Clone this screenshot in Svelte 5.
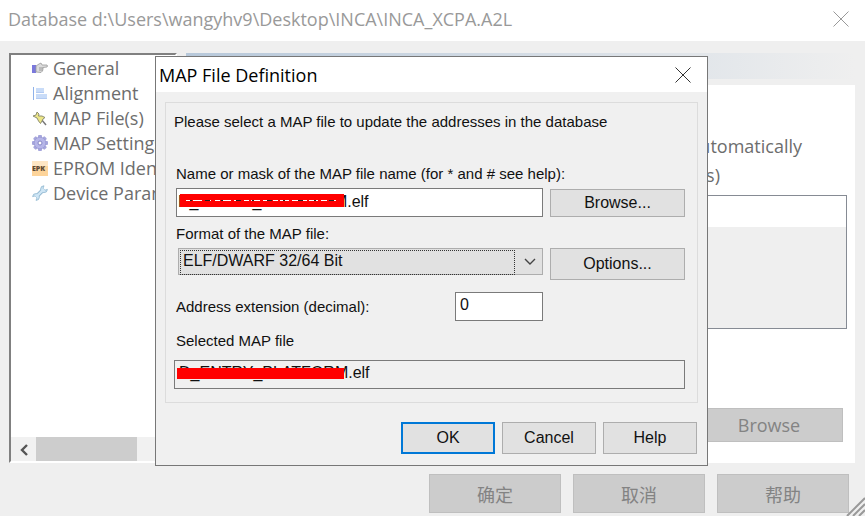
<script lang="ts">
  type TreeItem = { icon: string; label: string };

  const treeItems: TreeItem[] = [
    { icon: 'hand', label: 'General' },
    { icon: 'align', label: 'Alignment' },
    { icon: 'pin', label: 'MAP File(s)' },
    { icon: 'gear', label: 'MAP Settings' },
    { icon: 'epk', label: 'EPROM Identification' },
    { icon: 'wrench', label: 'Device Parameters' }
  ];

  const teeth = [0, 45, 90, 135, 180, 225, 270, 315];

  let fileMask = $state('D_ENTRY_PLATFORM.elf');
  let selectedFile = $state('D_ENTRY_PLATFORM.elf');
  let format = $state('ELF/DWARF 32/64 Bit');
  let extension = $state('0');
</script>

{#snippet treeIcon(name: string)}
  <svg class="tree-icon" viewBox="0 0 16 16" aria-hidden="true">
    {#if name === 'hand'}
      <rect x="0" y="5" width="4" height="8" fill="#7a78dc" />
      <path
        d="M4 6 L7 4 L9 3 L10 5 L15 5 Q16 6 15 7 L11 7.5 L11 9 L10.5 11 L9 12.5 L4 12 Z"
        fill="#dcdcdc"
        stroke="#9a9a9a"
        stroke-width="0.8"
      />
      <path d="M7 8 H11 M7 10 H10.5" stroke="#8c8c8c" stroke-width="0.8" />
    {:else if name === 'align'}
      <path d="M1.5 2 V15" stroke="#8fb2ea" />
      <rect x="4" y="3" width="8" height="4" fill="#c9dcf8" />
      <rect x="4" y="9" width="11" height="5" fill="#c9dcf8" />
      <path d="M4 7.5 H12 M4 13.5 H15" stroke="#b3cbf2" />
    {:else if name === 'pin'}
      <path d="M9 9 L14 15" stroke="#777" stroke-width="1.4" />
      <path
        d="M5 2 L7 4 L6.5 6 L10 6 L13 7.5 L11 9 L10 11 L8.5 13.5 L6.5 11 L5 8 L1 6 L4 5 Z"
        fill="#ece688"
        stroke="#85856a"
        stroke-width="0.9"
      />
    {:else if name === 'gear'}
      {#each teeth as angle}
        <rect
          x="6"
          y="0"
          width="4"
          height="4"
          rx="1"
          fill="#a6a6dc"
          transform="rotate({angle} 8 8)"
        />
      {/each}
      <circle cx="8" cy="8" r="5.8" fill="#b6b6e8" stroke="#9c9cd6" stroke-width="0.8" />
      <circle cx="8" cy="8" r="2" fill="#fff" stroke="#8585c4" />
    {:else if name === 'epk'}
      <rect x="0" y="1" width="16" height="15" fill="#fdd49a" />
      <rect x="0" y="1" width="16" height="5" fill="#fee6c4" />
      <text x="0" y="11" font-size="7" font-weight="800" fill="#5c4a38">EPK</text>
    {:else}
      <path d="M4 12 L12 4" stroke="#8fb6cf" stroke-width="4" />
      <path
        d="M12 0.8 A3.4 3.4 0 1 0 15.4 4.4 L13 5.2 L11 3.2 Z M4 15.4 A3.4 3.4 0 1 0 0.6 11.6 L3 11 L5 13 Z"
        fill="#cfe6f5"
        stroke="#8fb6cf"
        stroke-width="0.8"
      />
      <path d="M4 12 L12 4" stroke="#cfe6f5" stroke-width="2.4" />
    {/if}
  </svg>
{/snippet}

<div class="window">
  <header class="titlebar">
    <h1>Database d:\Users\wangyhv9\Desktop\INCA\INCA_XCPA.A2L</h1>
    <button class="close" aria-label="Close window">
      <svg viewBox="0 0 16 16"><path d="M0.5 0.5 L15.5 15.5 M15.5 0.5 L0.5 15.5" /></svg>
    </button>
  </header>

  <main class="body">
    <nav class="tree">
      <ul>
        {#each treeItems as item}
          <li>
            {@render treeIcon(item.icon)}
            <span>{item.label}</span>
          </li>
        {/each}
      </ul>
      <div class="scrollbar">
        <button class="scroll-left" aria-label="Scroll left">
          <svg viewBox="0 0 10 12"><path d="M8 1 L3 6 L8 11" /></svg>
        </button>
        <div class="thumb"></div>
      </div>
    </nav>

    <div class="content">
      <div class="banner"></div>
      <section class="page">
        <p>automatically</p>
        <p class="file-count">(s)</p>
        <div class="listbox"><div class="list-row"></div></div>
        <button class="flat page-browse" disabled>Browse</button>
      </section>
    </div>
  </main>

  <footer class="actions">
    <button class="flat" disabled>确定</button>
    <button class="flat" disabled>取消</button>
    <button class="flat" disabled>帮助</button>
  </footer>

  <svg class="grip" viewBox="0 0 20 20" aria-hidden="true">
    <path d="M2 20 L20 2 M8 20 L20 8 M14 20 L20 14" />
  </svg>

  <div class="dialog" role="dialog" aria-labelledby="dialog-title">
    <header class="dialog-title">
      <h2 id="dialog-title">MAP File Definition</h2>
      <button class="close" aria-label="Close dialog">
        <svg viewBox="0 0 16 16"><path d="M0.5 0.5 L15.5 15.5 M15.5 0.5 L0.5 15.5" /></svg>
      </button>
    </header>

    <div class="group">
      <p class="intro">Please select a MAP file to update the addresses in the database</p>

      <label for="mask">Name or mask of the MAP file name (for * and # see help):</label>
      <div class="row mask-row">
        <div class="field mask-field">
          <input id="mask" type="text" bind:value={fileMask} />
          <svg class="redact mask-redact" viewBox="0 0 164 13" aria-hidden="true">
            <rect width="164" height="13" fill="#f00" />
            <path d="M6 6.5 H158" stroke="#fff" stroke-dasharray="5 2 9 3 6 4" />
            <path d="M10 6.5 H158" stroke="#222" stroke-dasharray="2 13 5 11" />
          </svg>
        </div>
        <button class="btn">Browse...</button>
      </div>

      <label for="format">Format of the MAP file:</label>
      <div class="row format-row">
        <div class="field select-field">
          <select id="format" bind:value={format}>
            <option>ELF/DWARF 32/64 Bit</option>
          </select>
          <svg class="chevron" viewBox="0 0 12 8"><path d="M1 1 L6 6 L11 1" /></svg>
        </div>
        <button class="btn">Options...</button>
      </div>

      <div class="extension-row">
        <label for="extension">Address extension (decimal):</label>
        <input id="extension" type="text" bind:value={extension} />
      </div>

      <label for="selected">Selected MAP file</label>
      <div class="field selected-field">
        <input id="selected" type="text" readonly bind:value={selectedFile} />
        <div class="redact selected-redact"></div>
      </div>
    </div>

    <footer class="dialog-actions">
      <button class="btn default">OK</button>
      <button class="btn">Cancel</button>
      <button class="btn">Help</button>
    </footer>
  </div>
</div>

<style>
  :global(body) {
    margin: 0;
  }

  .window,
  .window * {
    box-sizing: border-box;
  }

  .window {
    position: relative;
    display: flex;
    flex-direction: column;
    min-height: 100vh;
    overflow: hidden;
    background: #efefef;
    color: #6d6d6d;
    font-family: 'Open Sans', 'Noto Sans CJK SC', sans-serif;
    font-size: 18px;
  }

  h1,
  h2,
  p,
  ul {
    margin: 0;
    padding: 0;
    font-weight: normal;
  }

  button {
    padding: 0;
    font: inherit;
  }

  .titlebar {
    display: flex;
    align-items: center;
    justify-content: space-between;
    height: 41px;
    padding: 0 16px 4px 8px;
    background: #fff;
    color: #999;
  }

  h1,
  h2 {
    font-size: 18px;
  }

  .close {
    display: flex;
    border: 0;
    background: none;
  }

  .close svg {
    width: 16px;
    height: 16px;
    stroke: #999;
  }

  .body {
    display: flex;
    flex: 1;
    gap: 9px;
    padding: 12px 10px 0 9px;
  }

  /* Tree */
  .tree {
    display: flex;
    flex-direction: column;
    width: 168px;
    overflow: hidden;
    border: 2px solid #808080;
    border-right-color: #fff;
    border-bottom-color: #fff;
    background: #fff;
  }

  ul {
    flex: 1;
    padding-left: 21px;
    list-style: none;
  }

  li {
    display: flex;
    align-items: center;
    gap: 5px;
    height: 25px;
    white-space: nowrap;
  }

  .tree-icon {
    flex: none;
    width: 16px;
    height: 16px;
    fill: none;
  }

  .scrollbar {
    display: flex;
    height: 24px;
    background: #f1f1f1;
  }

  .scroll-left {
    width: 25px;
    border: 0;
    background: none;
  }

  .scroll-left svg {
    width: 10px;
    height: 12px;
    fill: none;
    stroke: #555;
    stroke-width: 2.4;
  }

  .thumb {
    width: 101px;
    background: #cdcdcd;
  }

  /* Page */
  .content {
    display: flex;
    flex: 1;
    flex-direction: column;
    gap: 6px;
  }

  .banner {
    height: 26px;
    background: linear-gradient(90deg, #b7c8da, #efefef);
  }

  .page {
    display: flex;
    flex: 1;
    flex-direction: column;
    align-items: flex-end;
    padding: 47px 8px 21px;
    background: #fff;
  }

  .page p {
    padding-right: 45px;
    line-height: 29px;
  }

  .page .file-count {
    padding-right: 127px;
  }

  .listbox {
    width: 100%;
    height: 134px;
    margin: 5px 0 auto;
    border: 1px solid #868b94;
    background: #efefef;
  }

  .list-row {
    height: 31px;
    background: #fff;
  }

  .flat {
    width: 132px;
    height: 39px;
    border: 1px solid #bfbfbf;
    background: #ccc;
    color: #838383;
  }

  .page-browse {
    width: 148px;
    height: 34px;
    margin-right: 4px;
  }

  .actions {
    display: flex;
    justify-content: flex-end;
    gap: 12px;
    padding: 11px 16px 3px;
  }

  .grip {
    position: absolute;
    right: 0;
    bottom: 0;
    width: 20px;
    height: 20px;
    stroke: #999;
    stroke-width: 2;
  }

  /* Dialog */
  .dialog {
    position: absolute;
    top: 56px;
    left: 155px;
    width: 553px;
    border: 1px solid #777;
    background: #f0f0f0;
    color: #111;
    font-family: 'Liberation Sans', Arial, sans-serif;
    font-size: 16px;
    line-height: 20px;
  }

  .dialog-title {
    display: flex;
    align-items: center;
    justify-content: space-between;
    height: 35px;
    padding: 0 16px 0 3px;
    background: #fff;
    color: #000;
    font-family: 'Open Sans', sans-serif;
  }

  .dialog .close svg {
    stroke: #333;
  }

  .group {
    display: flex;
    flex-direction: column;
    margin: 10px 9px 0;
    padding: 9px 12px 13px 8px;
    border: 1px solid #dcdcdc;
  }

  .group label {
    padding-left: 2px;
    font-size: 15px;
  }

  .intro {
    margin-bottom: 32px;
    font-size: 15px;
  }

  .row {
    display: flex;
    gap: 7px;
    padding-left: 2px;
  }

  .row .btn {
    width: 135px;
  }

  .field {
    position: relative;
    flex: 1;
  }

  .group input {
    display: block;
    width: 100%;
    height: 29px;
    padding: 0 4px 4px;
    border: 1px solid #7a7a7a;
    background: #fff;
    color: #111;
    font: inherit;
  }

  .group .mask-field input {
    padding: 0 1px 2px;
  }

  .mask-row {
    align-items: center;
    margin: 4px 0 7px;
  }

  .mask-row .btn {
    height: 28px;
  }

  .redact {
    position: absolute;
    background: #f00;
  }

  .mask-redact {
    top: 6px;
    left: 4px;
    width: 164px;
    height: 13px;
  }

  .format-row {
    margin: 4px 0 12px;
  }

  .select-field {
    padding-left: 2px;
  }

  select {
    display: block;
    width: 100%;
    height: 27px;
    padding: 0 4px 1px;
    appearance: none;
    border: 1px solid #adadad;
    border-radius: 0;
    background: #e1e1e1;
    color: #111;
    font: inherit;
  }

  /* focus rectangle around the chosen option */
  .select-field::after {
    position: absolute;
    top: 2px;
    right: 28px;
    left: 4px;
    height: 23px;
    border: 1px dotted #333;
    content: '';
    pointer-events: none;
  }

  .chevron {
    position: absolute;
    top: 10px;
    right: 7px;
    width: 12px;
    height: 8px;
    fill: none;
    stroke: #444;
    stroke-width: 1.4;
    pointer-events: none;
  }

  .extension-row {
    display: flex;
    align-items: center;
    justify-content: space-between;
    margin-bottom: 10px;
    padding-right: 142px;
  }

  .extension-row input {
    width: 88px;
  }

  .selected-field {
    margin-top: 9px;
  }

  .group .selected-field input {
    background: #f0f0f0;
  }

  .selected-redact {
    top: 8px;
    left: 3px;
    width: 167px;
    height: 11px;
  }

  .btn {
    height: 32px;
    border: 1px solid #adadad;
    background: #e1e1e1;
    color: #111;
  }

  .dialog-actions {
    display: flex;
    justify-content: flex-end;
    gap: 7px;
    padding: 19px 10px 11px;
  }

  .dialog-actions .btn {
    width: 94px;
  }

  .default {
    border: 2px solid #0078d7;
  }
</style>
